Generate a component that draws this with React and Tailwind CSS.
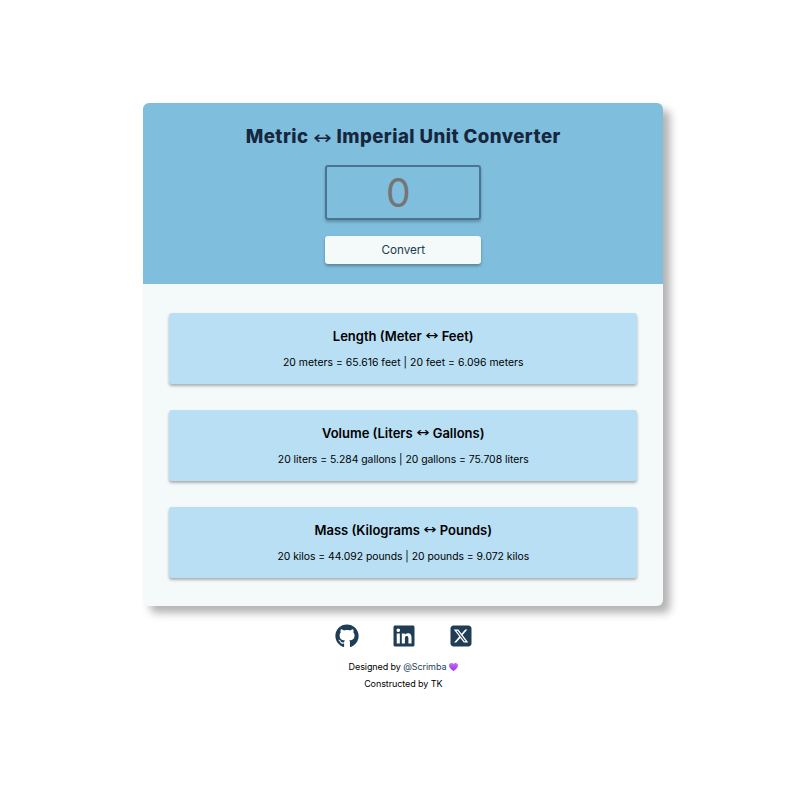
import { FaGithub, FaLinkedin, FaSquareXTwitter } from "react-icons/fa6";

const results = [
  { before: "Length (Meter", after: "Feet)", text: "20 meters = 65.616 feet | 20 feet = 6.096 meters", tracking: "tracking-[0.04px]" },
  { before: "Volume (Liters", after: "Gallons)", text: "20 liters = 5.284 gallons | 20 gallons = 75.708 liters", tracking: "tracking-[-0.02px]" },
  { before: "Mass (Kilograms", after: "Pounds)", text: "20 kilos = 44.092 pounds | 20 pounds = 9.072 kilos", tracking: "tracking-[-0.03px]" },
];

export default function App() {
  return (
    <div className="flex h-[800px] w-[806.5px] flex-col items-center bg-white pt-[103.4px] font-['Inter',sans-serif] text-black">
      <main className="h-[503px] w-[520px] rounded-[6px] bg-[#f4f9fa] shadow-[7px_7px_9px_rgba(0,0,0,0.3)]">
        <header className="flex h-[180.5px] flex-col items-center rounded-t-[6px] bg-[#7fbedd] pt-[21px]">
          <h1 className="flex h-6 items-center whitespace-nowrap text-[18.6px] leading-6 font-extrabold tracking-[0.45px] text-[#16263d]">
            <span>Metric</span>
            <span className="flex w-[28px] scale-y-85 justify-center pt-[3px] font-['DejaVu_Sans',sans-serif] text-[22px] font-normal tracking-normal">↔</span>
            <span>Imperial Unit Converter</span>
          </h1>
          <input
            aria-label="Value"
            placeholder="0"
            className="mt-[17px] h-[54.5px] w-[156px] rounded-[3px] border-2 border-[#4a7492] bg-transparent pr-[10px] text-center text-[39px] leading-none shadow-[0_2px_3px_rgba(0,0,0,0.25)] placeholder:text-[#757575]"
          />
          <button className="mt-[16px] h-7 w-[156px] rounded-[3px] bg-[#f4f9fa] pt-[1.5px] text-[11.7px] tracking-[-0.05px] text-[#1f3a52] shadow-[0_2px_3px_rgba(0,0,0,0.3)]">
            Convert
          </button>
        </header>
        <div className="flex flex-col gap-[26px] px-[26px] pt-[28.7px]">
          {results.map((r) => (
            <section
              key={r.before}
              className="flex h-[71.2px] flex-col items-center rounded-[3px] bg-[#b8dff4] pt-[14px] whitespace-nowrap shadow-[0_2px_3px_rgba(0,0,0,0.3)]"
            >
              <h2 className="flex h-[18px] items-center text-[13px] leading-[18px] font-semibold">
                <span>{r.before}</span>
                <span className="flex w-[20px] scale-y-85 justify-center pt-px font-['DejaVu_Sans',sans-serif] text-[15.5px] font-normal">↔</span>
                <span>{r.after}</span>
              </h2>
              <p className={`mt-[10px] text-[10.4px] leading-4 ${r.tracking}`}>{r.text}</p>
            </section>
          ))}
        </div>
      </main>
      <footer className="flex flex-col items-center pt-[17.8px] text-[9px] leading-[17px] tracking-[-0.09px]">
        <div className="mb-[10px] flex items-center gap-[33px] pl-px text-[24px] text-[#1f3d55]">
          <FaGithub />
          <FaLinkedin />
          <FaSquareXTwitter />
        </div>
        <p className="flex items-center gap-[2.5px]">
          <span>
            Designed by <a className="text-[#1f3d55]">@Scrimba</a>
          </span>
          <svg viewBox="0 0 20 18" className="h-[8px] w-[9px]" aria-hidden="true">
            <defs>
              <linearGradient id="heart" x1="0" y1="0" x2="0" y2="1">
                <stop offset="0" stopColor="#c969ff" />
                <stop offset="1" stopColor="#9d31e8" />
              </linearGradient>
            </defs>
            <path fill="url(#heart)" d="M10 18C4 14 0 10 0 5.5C0 2 2.5 0 5.3 0C7.5 0 9.2 1.2 10 3C10.8 1.2 12.5 0 14.7 0C17.5 0 20 2 20 5.5C20 10 16 14 10 18Z" />
          </svg>
        </p>
        <p>Constructed by TK</p>
      </footer>
    </div>
  );
}
